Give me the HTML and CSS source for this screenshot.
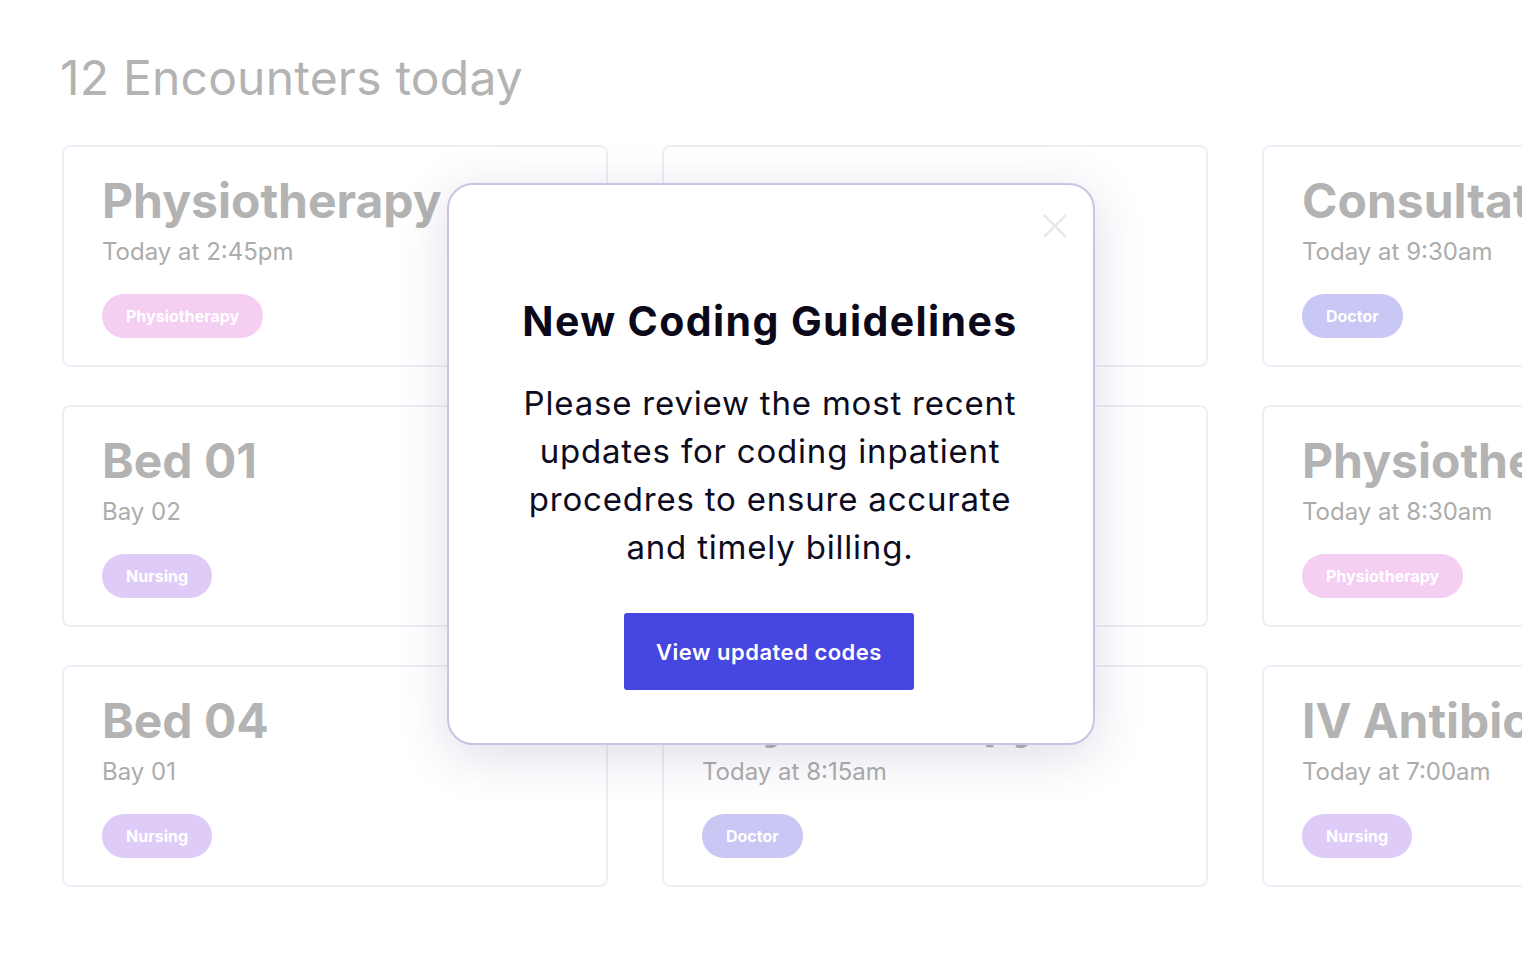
FILE: index.html
```html
<!DOCTYPE html>
<html lang="en">
<head>
    <meta charset="UTF-8">
    <meta name="viewport" content="width=device-width, initial-scale=1.0">
    <title>Encounters</title>
    <link rel="stylesheet" href="styles.css">
</head>
<body>
    <div id="page">
        <h1 class="pageTitle">12 Encounters today</h1>

        <div id="encounters">
            <div class="card">
                <h2 class="cardTitle">Physiotherapy</h2>
                <div class="cardSub">Today at 2:45pm</div>
                <span class="badge physio">Physiotherapy</span>
            </div>
            <div class="card">
                <h2 class="cardTitle">Bed 02</h2>
                <div class="cardSub">Bay 03</div>
                <span class="badge nursing">Nursing</span>
            </div>
            <div class="card">
                <h2 class="cardTitle">Consultation</h2>
                <div class="cardSub">Today at 9:30am</div>
                <span class="badge doctor">Doctor</span>
            </div>

            <div class="card">
                <h2 class="cardTitle">Bed 01</h2>
                <div class="cardSub">Bay 02</div>
                <span class="badge nursing">Nursing</span>
            </div>
            <div class="card">
                <h2 class="cardTitle">Bed 03</h2>
                <div class="cardSub">Bay 01</div>
                <span class="badge nursing">Nursing</span>
            </div>
            <div class="card">
                <h2 class="cardTitle">Physiotherapy</h2>
                <div class="cardSub">Today at 8:30am</div>
                <span class="badge physio">Physiotherapy</span>
            </div>

            <div class="card">
                <h2 class="cardTitle">Bed 04</h2>
                <div class="cardSub">Bay 01</div>
                <span class="badge nursing">Nursing</span>
            </div>
            <div class="card">
                <h2 class="cardTitle">Physiotherapy</h2>
                <div class="cardSub">Today at 8:15am</div>
                <span class="badge doctor">Doctor</span>
            </div>
            <div class="card">
                <h2 class="cardTitle">IV Antibiotics</h2>
                <div class="cardSub">Today at 7:00am</div>
                <span class="badge nursing">Nursing</span>
            </div>
        </div>
    </div>

    <div id="modal">
        <button class="closeBtn" aria-label="Close">
            <svg width="24" height="24" viewBox="0 0 24 24">
                <path d="M1 1 L23 23 M23 1 L1 23" stroke="#e9e9ed" stroke-width="2.5" fill="none"/>
            </svg>
        </button>
        <h3 class="modalTitle">New Coding Guidelines</h3>
        <p class="modalText">
            Please review the most recent<br>
            updates for coding inpatient<br>
            procedres to ensure accurate<br>
            and timely billing.
        </p>
        <button class="primaryBtn">View updated codes</button>
    </div>
</body>
</html>
```

FILE: styles.css
```css
body {
    font-family: Inter, "Noto Sans", sans-serif;
    margin: 0;
    background: #fff;
}
#page {
    margin-right: 18px;
    padding: 48px 0 0 62px;
    overflow: hidden;
    height: 932px;
}
.pageTitle {
    margin: 0 0 37px -2px;
    font-size: 48px;
    line-height: 60px;
    font-weight: 400;
    letter-spacing: 0.2px;
    color: #b3b3b3;
}
#encounters {
    display: grid;
    grid-template-columns: 546px 546px 546px;
    column-gap: 54px;
    row-gap: 38px;
}
.card {
    box-sizing: border-box;
    height: 222px;
    border: 2px solid #efeef6;
    border-radius: 8px;
    padding: 25px 38px 0;
    white-space: nowrap;
}
.cardTitle {
    margin: 0;
    font-size: 48px;
    line-height: 58px;
    font-weight: 700;
    color: #b3b3b3;
}
.cardSub {
    margin-top: 7px;
    font-size: 24px;
    line-height: 29px;
    color: #acacac;
}
.badge {
    display: inline-block;
    margin-top: 28px;
    height: 44px;
    line-height: 44px;
    padding: 0 24px;
    border-radius: 22px;
    font-size: 16px;
    font-weight: 700;
    color: #fff;
}
.physio {
    background: #f4cff2;
}
.nursing {
    background: #dfcbf8;
}
.doctor {
    background: #c9c8f4;
}
#modal {
    position: absolute;
    left: 447px;
    top: 183px;
    box-sizing: border-box;
    width: 648px;
    height: 562px;
    background: #fff;
    border: 2px solid #c8c4e3;
    border-radius: 26px;
    box-shadow: 0 10px 50px rgba(70, 60, 130, 0.18);
    display: flex;
    flex-direction: column;
    align-items: center;
    padding-top: 113px;
}
.closeBtn {
    position: absolute;
    top: 29px;
    right: 26px;
    padding: 0;
    border: 0;
    background: none;
    width: 24px;
    height: 24px;
}
.modalTitle {
    margin: 0 0 0 -2px;
    font-size: 41px;
    line-height: 46px;
    font-weight: 700;
    letter-spacing: 1.4px;
    color: #0a0819;
}
.modalText {
    margin: 35px 0 0 -2px;
    font-size: 33px;
    line-height: 48px;
    letter-spacing: 0.8px;
    text-align: center;
    color: #0d0b1e;
}
.primaryBtn {
    margin: 42px 0 0 -4px;
    width: 290px;
    height: 77px;
    border: 0;
    border-radius: 3px;
    background: #4646e0;
    color: #fff;
    font-family: Inter, sans-serif;
    font-size: 22px;
    font-weight: 600;
    letter-spacing: 0.5px;
}
```
